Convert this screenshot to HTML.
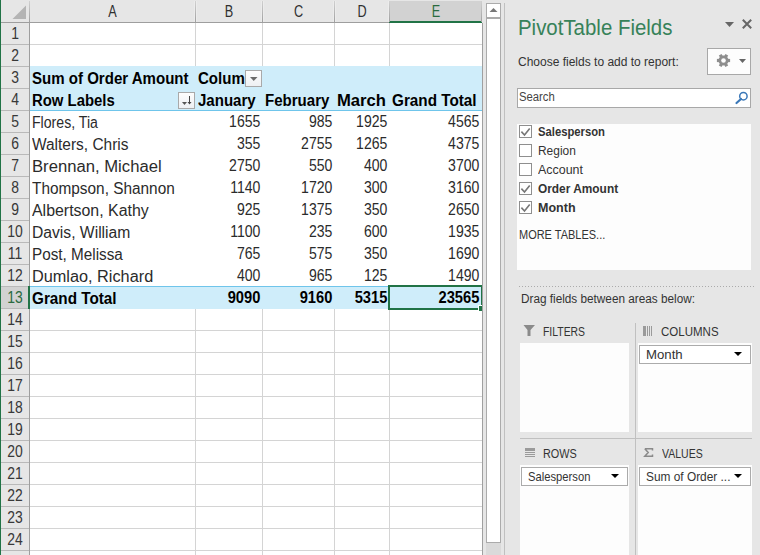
<!DOCTYPE html>
<html><head><meta charset="utf-8">
<style>
*{margin:0;padding:0;box-sizing:border-box}
html,body{width:760px;height:555px;overflow:hidden;background:#e6e6e6;font-family:"Liberation Sans",sans-serif}
.a{position:absolute}
.g{font-size:16px;color:#2b2b2b;white-space:nowrap;line-height:21px}
.n{font-size:15.5px;color:#111;white-space:nowrap;line-height:21px;transform:scaleX(0.87);transform-origin:100% 50%}
.b{font-weight:bold;color:#000}
.p{font-size:12px;color:#333;white-space:nowrap;line-height:14px}
</style></head><body>

<div class="a" style="left:30px;top:23px;width:452px;height:532px;background:#fff"></div>
<div class="a" style="left:30px;top:44px;width:452px;height:1px;background:#d4d4d4"></div>
<div class="a" style="left:30px;top:330px;width:452px;height:1px;background:#d4d4d4"></div>
<div class="a" style="left:30px;top:352px;width:452px;height:1px;background:#d4d4d4"></div>
<div class="a" style="left:30px;top:374px;width:452px;height:1px;background:#d4d4d4"></div>
<div class="a" style="left:30px;top:396px;width:452px;height:1px;background:#d4d4d4"></div>
<div class="a" style="left:30px;top:418px;width:452px;height:1px;background:#d4d4d4"></div>
<div class="a" style="left:30px;top:440px;width:452px;height:1px;background:#d4d4d4"></div>
<div class="a" style="left:30px;top:462px;width:452px;height:1px;background:#d4d4d4"></div>
<div class="a" style="left:30px;top:484px;width:452px;height:1px;background:#d4d4d4"></div>
<div class="a" style="left:30px;top:506px;width:452px;height:1px;background:#d4d4d4"></div>
<div class="a" style="left:30px;top:528px;width:452px;height:1px;background:#d4d4d4"></div>
<div class="a" style="left:30px;top:550px;width:452px;height:1px;background:#d4d4d4"></div>
<div class="a" style="left:195px;top:23px;width:1px;height:43px;background:#d4d4d4"></div>
<div class="a" style="left:195px;top:309px;width:1px;height:246px;background:#d4d4d4"></div>
<div class="a" style="left:262px;top:23px;width:1px;height:43px;background:#d4d4d4"></div>
<div class="a" style="left:262px;top:309px;width:1px;height:246px;background:#d4d4d4"></div>
<div class="a" style="left:334px;top:23px;width:1px;height:43px;background:#d4d4d4"></div>
<div class="a" style="left:334px;top:309px;width:1px;height:246px;background:#d4d4d4"></div>
<div class="a" style="left:389px;top:23px;width:1px;height:43px;background:#d4d4d4"></div>
<div class="a" style="left:389px;top:309px;width:1px;height:246px;background:#d4d4d4"></div>
<div class="a" style="left:1px;top:0;width:481px;height:22px;background:#e6e6e6"></div>
<div class="a" style="left:390px;top:1px;width:91px;height:20px;background:#d2d2d2"></div>
<div class="a" style="left:1px;top:22px;width:388px;height:1px;background:#9e9e9e"></div>
<div class="a" style="left:389px;top:21px;width:93px;height:2px;background:#217346"></div>
<div class="a" style="left:29px;top:1px;width:1px;height:21px;background:linear-gradient(#d0d0d0,#a0a0a0)"></div>
<div class="a" style="left:194px;top:1px;width:3px;height:21px;background:#ececec"></div>
<div class="a" style="left:195px;top:1px;width:1px;height:21px;background:linear-gradient(#d0d0d0,#a0a0a0)"></div>
<div class="a" style="left:261px;top:1px;width:3px;height:21px;background:#ececec"></div>
<div class="a" style="left:262px;top:1px;width:1px;height:21px;background:linear-gradient(#d0d0d0,#a0a0a0)"></div>
<div class="a" style="left:333px;top:1px;width:3px;height:21px;background:#ececec"></div>
<div class="a" style="left:334px;top:1px;width:1px;height:21px;background:linear-gradient(#d0d0d0,#a0a0a0)"></div>
<div class="a" style="left:388px;top:1px;width:2px;height:21px;background:#ececec"></div>
<div class="a" style="left:389px;top:1px;width:1px;height:21px;background:linear-gradient(#d0d0d0,#a0a0a0)"></div>
<div class="a" style="left:481px;top:1px;width:1px;height:21px;background:linear-gradient(#d0d0d0,#a0a0a0)"></div>
<svg class="a" style="left:0;top:0" width="29" height="22"><polygon points="12.5,19 26,19 26,5.5" fill="#b4b4b4"/></svg>
<div class="a g" style="left:30px;top:1px;width:165px;text-align:center;color:#303030;font-size:16.5px;transform:scaleX(0.77)">A</div>
<div class="a g" style="left:196px;top:1px;width:66px;text-align:center;color:#303030;font-size:16.5px;transform:scaleX(0.77)">B</div>
<div class="a g" style="left:263px;top:1px;width:71px;text-align:center;color:#303030;font-size:16.5px;transform:scaleX(0.77)">C</div>
<div class="a g" style="left:335px;top:1px;width:54px;text-align:center;color:#303030;font-size:16.5px;transform:scaleX(0.77)">D</div>
<div class="a g" style="left:390px;top:1px;width:92px;text-align:center;color:#2a6a3f;font-size:16.5px;transform:scaleX(0.77)">E</div>
<div class="a" style="left:1px;top:23px;width:28px;height:532px;background:#e6e6e6"></div>
<div class="a" style="left:29px;top:23px;width:1px;height:532px;background:#9e9e9e"></div>
<div class="a" style="left:1px;top:44px;width:28px;height:1px;background:#b9b9b9"></div>
<div class="a g" style="left:1px;top:23px;width:28px;text-align:center;color:#383838;transform:scaleX(0.87)">1</div>
<div class="a" style="left:1px;top:66px;width:28px;height:1px;background:#b9b9b9"></div>
<div class="a g" style="left:1px;top:45px;width:28px;text-align:center;color:#383838;transform:scaleX(0.87)">2</div>
<div class="a" style="left:1px;top:88px;width:28px;height:1px;background:#b9b9b9"></div>
<div class="a g" style="left:1px;top:67px;width:28px;text-align:center;color:#383838;transform:scaleX(0.87)">3</div>
<div class="a" style="left:1px;top:110px;width:28px;height:1px;background:#b9b9b9"></div>
<div class="a g" style="left:1px;top:89px;width:28px;text-align:center;color:#383838;transform:scaleX(0.87)">4</div>
<div class="a" style="left:1px;top:132px;width:28px;height:1px;background:#b9b9b9"></div>
<div class="a g" style="left:1px;top:111px;width:28px;text-align:center;color:#383838;transform:scaleX(0.87)">5</div>
<div class="a" style="left:1px;top:154px;width:28px;height:1px;background:#b9b9b9"></div>
<div class="a g" style="left:1px;top:133px;width:28px;text-align:center;color:#383838;transform:scaleX(0.87)">6</div>
<div class="a" style="left:1px;top:176px;width:28px;height:1px;background:#b9b9b9"></div>
<div class="a g" style="left:1px;top:155px;width:28px;text-align:center;color:#383838;transform:scaleX(0.87)">7</div>
<div class="a" style="left:1px;top:198px;width:28px;height:1px;background:#b9b9b9"></div>
<div class="a g" style="left:1px;top:177px;width:28px;text-align:center;color:#383838;transform:scaleX(0.87)">8</div>
<div class="a" style="left:1px;top:220px;width:28px;height:1px;background:#b9b9b9"></div>
<div class="a g" style="left:1px;top:199px;width:28px;text-align:center;color:#383838;transform:scaleX(0.87)">9</div>
<div class="a" style="left:1px;top:242px;width:28px;height:1px;background:#b9b9b9"></div>
<div class="a g" style="left:1px;top:221px;width:28px;text-align:center;color:#383838;transform:scaleX(0.87)">10</div>
<div class="a" style="left:1px;top:264px;width:28px;height:1px;background:#b9b9b9"></div>
<div class="a g" style="left:1px;top:243px;width:28px;text-align:center;color:#383838;transform:scaleX(0.87)">11</div>
<div class="a" style="left:1px;top:286px;width:28px;height:1px;background:#b9b9b9"></div>
<div class="a g" style="left:1px;top:265px;width:28px;text-align:center;color:#383838;transform:scaleX(0.87)">12</div>
<div class="a" style="left:1px;top:287px;width:28px;height:21px;background:#d2d2d2"></div>
<div class="a" style="left:1px;top:308px;width:28px;height:1px;background:#b9b9b9"></div>
<div class="a g" style="left:1px;top:287px;width:28px;text-align:center;color:#2a6a3f;transform:scaleX(0.87)">13</div>
<div class="a" style="left:1px;top:330px;width:28px;height:1px;background:#b9b9b9"></div>
<div class="a g" style="left:1px;top:309px;width:28px;text-align:center;color:#383838;transform:scaleX(0.87)">14</div>
<div class="a" style="left:1px;top:352px;width:28px;height:1px;background:#b9b9b9"></div>
<div class="a g" style="left:1px;top:331px;width:28px;text-align:center;color:#383838;transform:scaleX(0.87)">15</div>
<div class="a" style="left:1px;top:374px;width:28px;height:1px;background:#b9b9b9"></div>
<div class="a g" style="left:1px;top:353px;width:28px;text-align:center;color:#383838;transform:scaleX(0.87)">16</div>
<div class="a" style="left:1px;top:396px;width:28px;height:1px;background:#b9b9b9"></div>
<div class="a g" style="left:1px;top:375px;width:28px;text-align:center;color:#383838;transform:scaleX(0.87)">17</div>
<div class="a" style="left:1px;top:418px;width:28px;height:1px;background:#b9b9b9"></div>
<div class="a g" style="left:1px;top:397px;width:28px;text-align:center;color:#383838;transform:scaleX(0.87)">18</div>
<div class="a" style="left:1px;top:440px;width:28px;height:1px;background:#b9b9b9"></div>
<div class="a g" style="left:1px;top:419px;width:28px;text-align:center;color:#383838;transform:scaleX(0.87)">19</div>
<div class="a" style="left:1px;top:462px;width:28px;height:1px;background:#b9b9b9"></div>
<div class="a g" style="left:1px;top:441px;width:28px;text-align:center;color:#383838;transform:scaleX(0.87)">20</div>
<div class="a" style="left:1px;top:484px;width:28px;height:1px;background:#b9b9b9"></div>
<div class="a g" style="left:1px;top:463px;width:28px;text-align:center;color:#383838;transform:scaleX(0.87)">21</div>
<div class="a" style="left:1px;top:506px;width:28px;height:1px;background:#b9b9b9"></div>
<div class="a g" style="left:1px;top:485px;width:28px;text-align:center;color:#383838;transform:scaleX(0.87)">22</div>
<div class="a" style="left:1px;top:528px;width:28px;height:1px;background:#b9b9b9"></div>
<div class="a g" style="left:1px;top:507px;width:28px;text-align:center;color:#383838;transform:scaleX(0.87)">23</div>
<div class="a" style="left:1px;top:550px;width:28px;height:1px;background:#b9b9b9"></div>
<div class="a g" style="left:1px;top:529px;width:28px;text-align:center;color:#383838;transform:scaleX(0.87)">24</div>
<div class="a" style="left:1px;top:572px;width:28px;height:1px;background:#b9b9b9"></div>
<div class="a g" style="left:1px;top:551px;width:28px;text-align:center;color:#383838;transform:scaleX(0.87)">25</div>
<div class="a" style="left:0;top:0;width:1px;height:555px;background:#217346"></div>
<div class="a" style="left:30px;top:66px;width:452px;height:44px;background:#cfedfa"></div>
<div class="a" style="left:30px;top:110px;width:452px;height:1px;background:#6fc5eb"></div>
<div class="a" style="left:30px;top:286px;width:452px;height:1px;background:#6fc5eb"></div>
<div class="a" style="left:30px;top:287px;width:452px;height:22px;background:#cfedfa"></div>
<div class="a" style="left:28px;top:286px;width:2px;height:23px;background:#217346"></div>
<div class="a g b" style="left:32px;top:67.5px;transform:scaleX(0.94);transform-origin:0 0">Sum of Order Amount</div>
<div class="a" style="left:196px;top:67.5px;width:49px;height:21px;overflow:hidden"><div class="a g b" style="position:absolute;left:2px;top:0;transform:scaleX(0.94);transform-origin:0 0">Column Labels</div></div>
<div class="a g b" style="left:32px;top:89.5px;transform:scaleX(0.93);transform-origin:0 0">Row Labels</div>
<div class="a g b" style="left:198px;top:89.5px;transform:scaleX(0.94);transform-origin:0 0">January</div>
<div class="a g b" style="left:265px;top:89.5px;transform:scaleX(0.94);transform-origin:0 0">February</div>
<div class="a g b" style="left:337px;top:89.5px;transform:scaleX(1.04);transform-origin:0 0">March</div>
<div class="a g b" style="left:392px;top:89.5px;transform:scaleX(0.955);transform-origin:0 0">Grand Total</div>
<div class="a g" style="left:32px;top:111.5px;transform:scaleX(0.882);transform-origin:0 0">Flores, Tia</div>
<div class="a g" style="left:196px;top:110.5px;width:64.4px;font-size:15.8px;text-align:right;transform:scaleX(0.89);transform-origin:100% 0">1655</div>
<div class="a g" style="left:263px;top:110.5px;width:69.4px;font-size:15.8px;text-align:right;transform:scaleX(0.89);transform-origin:100% 0">985</div>
<div class="a g" style="left:335px;top:110.5px;width:52.4px;font-size:15.8px;text-align:right;transform:scaleX(0.89);transform-origin:100% 0">1925</div>
<div class="a g" style="left:390px;top:110.5px;width:89.4px;font-size:15.8px;text-align:right;transform:scaleX(0.89);transform-origin:100% 0">4565</div>
<div class="a g" style="left:32px;top:133.5px;transform:scaleX(0.966);transform-origin:0 0">Walters, Chris</div>
<div class="a g" style="left:196px;top:132.5px;width:64.4px;font-size:15.8px;text-align:right;transform:scaleX(0.89);transform-origin:100% 0">355</div>
<div class="a g" style="left:263px;top:132.5px;width:69.4px;font-size:15.8px;text-align:right;transform:scaleX(0.89);transform-origin:100% 0">2755</div>
<div class="a g" style="left:335px;top:132.5px;width:52.4px;font-size:15.8px;text-align:right;transform:scaleX(0.89);transform-origin:100% 0">1265</div>
<div class="a g" style="left:390px;top:132.5px;width:89.4px;font-size:15.8px;text-align:right;transform:scaleX(0.89);transform-origin:100% 0">4375</div>
<div class="a g" style="left:32px;top:155.5px;transform:scaleX(1.041);transform-origin:0 0">Brennan, Michael</div>
<div class="a g" style="left:196px;top:154.5px;width:64.4px;font-size:15.8px;text-align:right;transform:scaleX(0.89);transform-origin:100% 0">2750</div>
<div class="a g" style="left:263px;top:154.5px;width:69.4px;font-size:15.8px;text-align:right;transform:scaleX(0.89);transform-origin:100% 0">550</div>
<div class="a g" style="left:335px;top:154.5px;width:52.4px;font-size:15.8px;text-align:right;transform:scaleX(0.89);transform-origin:100% 0">400</div>
<div class="a g" style="left:390px;top:154.5px;width:89.4px;font-size:15.8px;text-align:right;transform:scaleX(0.89);transform-origin:100% 0">3700</div>
<div class="a g" style="left:32px;top:177.5px;transform:scaleX(0.961);transform-origin:0 0">Thompson, Shannon</div>
<div class="a g" style="left:196px;top:176.5px;width:64.4px;font-size:15.8px;text-align:right;transform:scaleX(0.89);transform-origin:100% 0">1140</div>
<div class="a g" style="left:263px;top:176.5px;width:69.4px;font-size:15.8px;text-align:right;transform:scaleX(0.89);transform-origin:100% 0">1720</div>
<div class="a g" style="left:335px;top:176.5px;width:52.4px;font-size:15.8px;text-align:right;transform:scaleX(0.89);transform-origin:100% 0">300</div>
<div class="a g" style="left:390px;top:176.5px;width:89.4px;font-size:15.8px;text-align:right;transform:scaleX(0.89);transform-origin:100% 0">3160</div>
<div class="a g" style="left:32px;top:199.5px;transform:scaleX(0.994);transform-origin:0 0">Albertson, Kathy</div>
<div class="a g" style="left:196px;top:198.5px;width:64.4px;font-size:15.8px;text-align:right;transform:scaleX(0.89);transform-origin:100% 0">925</div>
<div class="a g" style="left:263px;top:198.5px;width:69.4px;font-size:15.8px;text-align:right;transform:scaleX(0.89);transform-origin:100% 0">1375</div>
<div class="a g" style="left:335px;top:198.5px;width:52.4px;font-size:15.8px;text-align:right;transform:scaleX(0.89);transform-origin:100% 0">350</div>
<div class="a g" style="left:390px;top:198.5px;width:89.4px;font-size:15.8px;text-align:right;transform:scaleX(0.89);transform-origin:100% 0">2650</div>
<div class="a g" style="left:32px;top:221.5px;transform:scaleX(0.979);transform-origin:0 0">Davis, William</div>
<div class="a g" style="left:196px;top:220.5px;width:64.4px;font-size:15.8px;text-align:right;transform:scaleX(0.89);transform-origin:100% 0">1100</div>
<div class="a g" style="left:263px;top:220.5px;width:69.4px;font-size:15.8px;text-align:right;transform:scaleX(0.89);transform-origin:100% 0">235</div>
<div class="a g" style="left:335px;top:220.5px;width:52.4px;font-size:15.8px;text-align:right;transform:scaleX(0.89);transform-origin:100% 0">600</div>
<div class="a g" style="left:390px;top:220.5px;width:89.4px;font-size:15.8px;text-align:right;transform:scaleX(0.89);transform-origin:100% 0">1935</div>
<div class="a g" style="left:32px;top:243.5px;transform:scaleX(0.955);transform-origin:0 0">Post, Melissa</div>
<div class="a g" style="left:196px;top:242.5px;width:64.4px;font-size:15.8px;text-align:right;transform:scaleX(0.89);transform-origin:100% 0">765</div>
<div class="a g" style="left:263px;top:242.5px;width:69.4px;font-size:15.8px;text-align:right;transform:scaleX(0.89);transform-origin:100% 0">575</div>
<div class="a g" style="left:335px;top:242.5px;width:52.4px;font-size:15.8px;text-align:right;transform:scaleX(0.89);transform-origin:100% 0">350</div>
<div class="a g" style="left:390px;top:242.5px;width:89.4px;font-size:15.8px;text-align:right;transform:scaleX(0.89);transform-origin:100% 0">1690</div>
<div class="a g" style="left:32px;top:265.5px;transform:scaleX(1.017);transform-origin:0 0">Dumlao, Richard</div>
<div class="a g" style="left:196px;top:264.5px;width:64.4px;font-size:15.8px;text-align:right;transform:scaleX(0.89);transform-origin:100% 0">400</div>
<div class="a g" style="left:263px;top:264.5px;width:69.4px;font-size:15.8px;text-align:right;transform:scaleX(0.89);transform-origin:100% 0">965</div>
<div class="a g" style="left:335px;top:264.5px;width:52.4px;font-size:15.8px;text-align:right;transform:scaleX(0.89);transform-origin:100% 0">125</div>
<div class="a g" style="left:390px;top:264.5px;width:89.4px;font-size:15.8px;text-align:right;transform:scaleX(0.89);transform-origin:100% 0">1490</div>
<div class="a g b" style="left:32px;top:287.5px;transform:scaleX(0.955);transform-origin:0 0">Grand Total</div>
<div class="a g b" style="left:196px;top:286.5px;width:64.4px;font-size:15.8px;text-align:right;transform:scaleX(0.93);transform-origin:100% 0">9090</div>
<div class="a g b" style="left:263px;top:286.5px;width:69.4px;font-size:15.8px;text-align:right;transform:scaleX(0.93);transform-origin:100% 0">9160</div>
<div class="a g b" style="left:335px;top:286.5px;width:52.4px;font-size:15.8px;text-align:right;transform:scaleX(0.93);transform-origin:100% 0">5315</div>
<div class="a g b" style="left:390px;top:286.5px;width:89.4px;font-size:15.8px;text-align:right;transform:scaleX(0.93);transform-origin:100% 0">23565</div>
<div class="a" style="left:245px;top:70px;width:17px;height:17px;border:1px solid #a9a9a9;background:linear-gradient(#fdfdfd,#eef0f3)"></div>
<svg class="a" style="left:245px;top:70px" width="17" height="17"><polygon points="5,7 12.5,7 8.75,11" fill="#6a6a6a"/></svg>
<div class="a" style="left:178px;top:92px;width:17px;height:17px;border:1px solid #a9a9a9;background:linear-gradient(#fdfdfd,#eef0f3)"></div>
<svg class="a" style="left:178px;top:92px" width="17" height="17"><polygon points="4,10 9,10 6.5,13" fill="#555"/><path d="M11.5 4 V12" stroke="#444" stroke-width="1"/><polygon points="9.5,10 13.5,10 11.5,12.5" fill="#444"/></svg>
<div class="a" style="left:388px;top:285px;width:95px;height:25px;border:2px solid #217346"></div>
<div class="a" style="left:478px;top:305px;width:4px;height:6px;background:#217346;border-left:1px solid #fff;border-top:1px solid #fff"></div>
<div class="a" style="left:482px;top:23px;width:1px;height:532px;background:#a0a0a0"></div>
<div class="a" style="left:486px;top:3px;width:15px;height:540px;border:1px solid #ababab;background:#fff"></div>
<div class="a" style="left:486px;top:17px;width:15px;height:2px;background:#ababab"></div>
<svg class="a" style="left:486px;top:3px" width="15" height="15"><polygon points="3.5,9 11.5,9 7.5,5" fill="#777"/></svg>
<div class="a" style="left:486px;top:543px;width:15px;height:12px;background:#dadada"></div>
<div class="a" style="left:504px;top:3px;width:1px;height:552px;background:#c0c0c0"></div>
<div class="a" style="left:518px;top:16px;font-size:21.5px;line-height:24px;color:#378259;white-space:nowrap;transform:scaleX(0.95);transform-origin:0 0">PivotTable Fields</div>
<svg class="a" style="left:720px;top:15px" width="40" height="20"><polygon points="5,7 14,7 9.5,12" fill="#666"/><path d="M22.8 4.8 L31.2 13.2 M31.2 4.8 L22.8 13.2" stroke="#666" stroke-width="2"/></svg>
<div class="a p" style="left:518px;top:55px">Choose fields to add to report:</div>
<div class="a" style="left:707px;top:48px;width:44px;height:27px;border:1px solid #a8a8a8;background:#fdfdfd"></div>
<svg class="a" style="left:0;top:0" width="760" height="80"><g transform="translate(723.5,60.5)"><rect x="-1.6" y="-6.6" width="3.2" height="13.2" fill="#8e8e8e" transform="rotate(30)"/><rect x="-1.6" y="-6.6" width="3.2" height="13.2" fill="#8e8e8e" transform="rotate(90)"/><rect x="-1.6" y="-6.6" width="3.2" height="13.2" fill="#8e8e8e" transform="rotate(150)"/><circle r="5" fill="#8e8e8e"/><circle r="2.3" fill="#fdfdfd"/></g><polygon points="739,59 746,59 742.5,63" fill="#666"/></svg>
<div class="a" style="left:517px;top:88px;width:234px;height:20px;border:1px solid #a8a8a8;background:#fff"></div>
<div class="a p" style="left:518.5px;top:90px;color:#444;transform:scaleX(0.94);transform-origin:0 0">Search</div>
<svg class="a" style="left:730px;top:88px" width="20" height="20"><circle cx="13.4" cy="8.2" r="3.7" stroke="#3b78b8" stroke-width="1.5" fill="none"/><path d="M11 11 L6.5 15" stroke="#3b78b8" stroke-width="2.2" stroke-linecap="round"/></svg>
<div class="a" style="left:517px;top:124px;width:234px;height:146px;background:#fdfdfd"></div>
<div class="a" style="left:519px;top:125px;width:13px;height:13px;border:1px solid #8e8e8e;background:#fff"></div>
<svg class="a" style="left:519px;top:125px" width="13" height="13"><path d="M2.4 6.6 L5.5 10 L10.7 3.4" stroke="#777" stroke-width="1.6" fill="none"/></svg>
<div class="a p" style="left:537.5px;top:125px;transform:scaleX(0.9385714285714286);transform-origin:0 0;font-weight:bold">Salesperson</div>
<div class="a" style="left:519px;top:144px;width:13px;height:13px;border:1px solid #8e8e8e;background:#fff"></div>
<div class="a p" style="left:537.5px;top:144px;transform:scaleX(0.9944444444444444);transform-origin:0 0;">Region</div>
<div class="a" style="left:519px;top:163px;width:13px;height:13px;border:1px solid #8e8e8e;background:#fff"></div>
<div class="a p" style="left:537.5px;top:163px;transform:scaleX(1.0372093023255815);transform-origin:0 0;">Account</div>
<div class="a" style="left:519px;top:182px;width:13px;height:13px;border:1px solid #8e8e8e;background:#fff"></div>
<svg class="a" style="left:519px;top:182px" width="13" height="13"><path d="M2.4 6.6 L5.5 10 L10.7 3.4" stroke="#777" stroke-width="1.6" fill="none"/></svg>
<div class="a p" style="left:537.5px;top:182px;transform:scaleX(0.9901234567901235);transform-origin:0 0;font-weight:bold">Order Amount</div>
<div class="a" style="left:519px;top:201px;width:13px;height:13px;border:1px solid #8e8e8e;background:#fff"></div>
<svg class="a" style="left:519px;top:201px" width="13" height="13"><path d="M2.4 6.6 L5.5 10 L10.7 3.4" stroke="#777" stroke-width="1.6" fill="none"/></svg>
<div class="a p" style="left:537.5px;top:201px;transform:scaleX(1.042857142857143);transform-origin:0 0;font-weight:bold">Month</div>
<div class="a p" style="left:518.5px;top:228px;transform:scaleX(0.9152173913043479);transform-origin:0 0;">MORE TABLES...</div>
<div class="a" style="left:519px;top:286px;width:235px;height:1px;background:repeating-linear-gradient(to right,#ababab 0 1px,transparent 1px 3px)"></div>
<div class="a p" style="left:520.5px;top:292px;transform:scaleX(0.9805714285714285);transform-origin:0 0;">Drag fields between areas below:</div>
<div class="a" style="left:520px;top:343px;width:109px;height:89px;background:#fdfdfd"></div>
<div class="a" style="left:638px;top:343px;width:114px;height:89px;background:#fdfdfd"></div>
<div class="a" style="left:520px;top:465px;width:109px;height:90px;background:#fdfdfd"></div>
<div class="a" style="left:638px;top:465px;width:114px;height:90px;background:#fdfdfd"></div>
<div class="a" style="left:635px;top:323px;width:1px;height:232px;background:#c0c0c0"></div>
<div class="a" style="left:520px;top:438px;width:232px;height:1px;background:#c0c0c0"></div>
<div class="a p" style="left:542.5px;top:325px;transform:scaleX(0.8680851063829786);transform-origin:0 0;">FILTERS</div>
<div class="a p" style="left:660.5px;top:325px;transform:scaleX(0.9593220338983051);transform-origin:0 0;">COLUMNS</div>
<div class="a p" style="left:542.5px;top:447px;transform:scaleX(0.9055555555555556);transform-origin:0 0;">ROWS</div>
<div class="a p" style="left:661.5px;top:447px;transform:scaleX(0.8760869565217391);transform-origin:0 0;">VALUES</div>
<svg class="a" style="left:523px;top:325px" width="13" height="12"><polygon points="0.5,0 12,0 7.5,5 7.5,11 4.5,11 4.5,5" fill="#8a8a8a"/></svg>
<svg class="a" style="left:0;top:0" width="760" height="555" shape-rendering="crispEdges"><g fill="#9a9a9a"><rect x="643" y="326" width="3" height="10"/><rect x="647" y="326" width="1" height="10"/><rect x="649" y="326" width="1" height="10"/><rect x="651" y="326" width="1" height="10"/><rect x="525" y="448" width="10" height="3"/><rect x="525" y="452" width="10" height="1"/><rect x="525" y="454" width="10" height="1"/><rect x="525" y="456" width="10" height="1"/></g></svg>
<svg class="a" style="left:643px;top:447px" width="11" height="11"><path d="M1.8 1.8 H9.5 V3.4 M1.8 1.8 L5.2 5.5 L1.8 9.2 H9.5 V7.6" stroke="#8a8a8a" stroke-width="1.5" fill="none" stroke-linejoin="miter"/></svg>
<div class="a" style="left:639px;top:345px;width:112px;height:19px;border:1px solid #ababab;background:#fff"></div>
<div class="a p" style="left:645.5px;top:347px;font-size:13px;line-height:15px;transform:scaleX(1.0142857142857142);transform-origin:0 0">Month</div>
<svg class="a" style="left:734px;top:352px" width="9" height="6"><polygon points="0,0 8,0 4,4" fill="#000"/></svg>
<div class="a" style="left:521px;top:467px;width:107px;height:19px;border:1px solid #ababab;background:#fff"></div>
<div class="a p" style="left:527.5px;top:469px;font-size:13px;line-height:15px;transform:scaleX(0.8633802816901408);transform-origin:0 0">Salesperson</div>
<svg class="a" style="left:611px;top:474px" width="9" height="6"><polygon points="0,0 8,0 4,4" fill="#000"/></svg>
<div class="a" style="left:639px;top:467px;width:112px;height:19px;border:1px solid #ababab;background:#fff"></div>
<div class="a p" style="left:645.5px;top:469px;font-size:13px;line-height:15px;transform:scaleX(0.9133333333333333);transform-origin:0 0">Sum of Order ...</div>
<svg class="a" style="left:734px;top:474px" width="9" height="6"><polygon points="0,0 8,0 4,4" fill="#000"/></svg>
</body></html>
